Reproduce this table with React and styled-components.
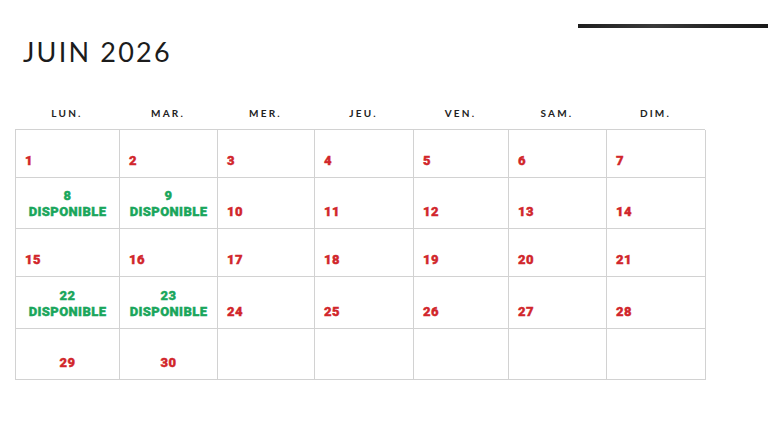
import React from "react";
import styled, { createGlobalStyle } from "styled-components";

const Global = createGlobalStyle`
  html, body { margin: 0; padding: 0; background: #fff; }
  body { width: 768px; height: 421px; overflow: hidden; font-family: "Lato", "Liberation Sans", sans-serif; }
`;

const Page = styled.div`
  width: 768px;
  height: 421px;
  display: flex;
  flex-direction: column;
`;

const TopRule = styled.div`
  align-self: flex-end;
  width: 190px;
  height: 4px;
  margin-top: 24px;
  background: linear-gradient(90deg, #1e1e1e, #3a3a3a 40%, #262626 70%, #1a1a1a);
`;

const Title = styled.h1`
  margin: 8px 0 0 23px;
  font-family: "Lato", sans-serif;
  font-weight: 400;
  font-size: 27px;
  line-height: 32px;
  letter-spacing: 2.2px;
  color: #1c1c1c;
`;

const columns = "104px 98px 97px 99px 95px 98px 99px";

const DayHeader = styled.div`
  display: grid;
  grid-template-columns: ${columns};
  margin: 38px 0 0 15px;
  height: 23px;
`;

const DayName = styled.div`
  text-align: center;
  font-family: "Lato", sans-serif;
  font-weight: 700;
  font-size: 10px;
  line-height: 14px;
  letter-spacing: 2.2px;
  color: #222;
`;

const Grid = styled.div`
  display: grid;
  grid-template-columns: ${columns};
  grid-template-rows: 48px 51px 48px 52px 51px;
  margin-left: 15px;
  width: 690px;
  border-top: 1px solid #d2d2d2;
  border-left: 1px solid #d2d2d2;
  box-sizing: border-box;
`;

const Cell = styled.div`
  display: flex;
  flex-direction: column;
  justify-content: flex-end;
  align-items: ${(p) => (p.$center ? "center" : "flex-start")};
  padding: 0 9px 8px;
  border-right: 1px solid #d2d2d2;
  border-bottom: 1px solid #d2d2d2;
  box-sizing: border-box;
  font-family: "Roboto", "Liberation Sans", sans-serif;
  font-weight: 900;
  font-size: 13px;
  line-height: 16px;
  letter-spacing: 0.4px;
  -webkit-text-stroke: 0.4px currentColor;
  color: ${(p) => (p.$free ? "#1aa65c" : "#d1262b")};
`;

const weeks = [
  [1, 2, 3, 4, 5, 6, 7],
  [8, 9, 10, 11, 12, 13, 14],
  [15, 16, 17, 18, 19, 20, 21],
  [22, 23, 24, 25, 26, 27, 28],
  [29, 30, null, null, null, null, null],
];

const free = new Set([8, 9, 22, 23]);
const centered = new Set([29, 30]);

const days = ["LUN.", "MAR.", "MER.", "JEU.", "VEN.", "SAM.", "DIM."];

export default function App() {
  return (
    <Page>
      <Global />
      <TopRule />
      <Title>JUIN 2026</Title>
      <DayHeader>
        {days.map((d) => (
          <DayName key={d}>{d}</DayName>
        ))}
      </DayHeader>
      <Grid>
        {weeks.flat().map((n, i) => {
          const isFree = free.has(n);
          return (
            <Cell key={i} $free={isFree} $center={isFree || centered.has(n)}>
              {n !== null && <span>{n}</span>}
              {isFree && <span>DISPONIBLE</span>}
            </Cell>
          );
        })}
      </Grid>
    </Page>
  );
}
